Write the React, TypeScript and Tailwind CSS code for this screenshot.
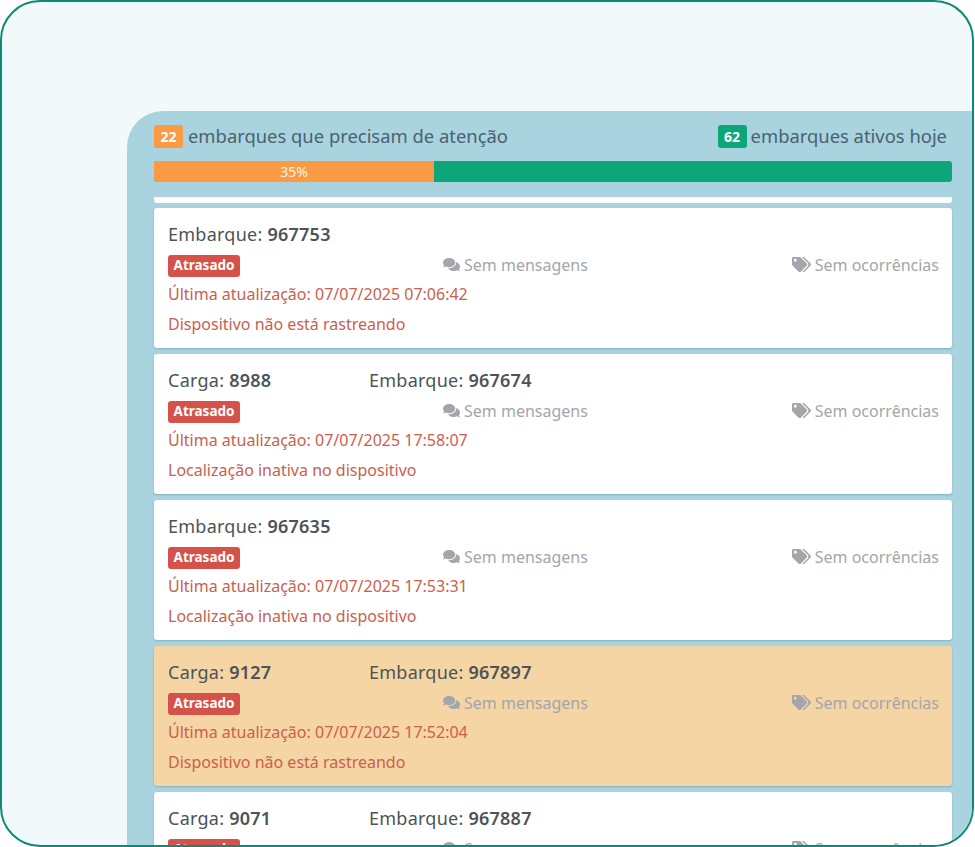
import { FaComments, FaTags } from "react-icons/fa";

type Shipment = {
  carga?: string;
  embarque: string;
  updated: string;
  reason: string;
  highlight?: boolean;
};

const shipments: Shipment[] = [
  { embarque: "967753", updated: "07/07/2025 07:06:42", reason: "Dispositivo não está rastreando" },
  { carga: "8988", embarque: "967674", updated: "07/07/2025 17:58:07", reason: "Localização inativa no dispositivo" },
  { embarque: "967635", updated: "07/07/2025 17:53:31", reason: "Localização inativa no dispositivo" },
  { carga: "9127", embarque: "967897", updated: "07/07/2025 17:52:04", reason: "Dispositivo não está rastreando", highlight: true },
  { carga: "9071", embarque: "967887", updated: "07/07/2025 17:50:12", reason: "Dispositivo não está rastreando" },
];

function ShipmentCard({ s }: { s: Shipment }) {
  return (
    <div
      className={`shrink-0 h-[140px] rounded-[3px] pl-[14px] pr-[13px] pt-[14px] shadow-[0_1px_2px_rgba(60,110,130,0.35)] ${
        s.highlight ? "bg-[#f5d5a3]" : "bg-white"
      }`}
    >
      <div className="flex h-[25px] items-center text-[18px] tracking-[0.25px] text-[#4d5357]">
        {s.carga && (
          <div className="w-[201px]">
            Carga: <b className="font-semibold">{s.carga}</b>
          </div>
        )}
        <div>
          Embarque: <b className="font-semibold">{s.embarque}</b>
        </div>
      </div>
      <div className="mt-[6px] flex h-[23px] items-center text-[16px] text-[#a3a6aa]">
        <div className="w-[275px]">
          <span className="inline-flex h-[22px] w-[72px] items-center justify-center rounded-[3px] bg-[#d4524a] text-[13.5px] font-bold text-white">
            Atrasado
          </span>
        </div>
        <div className="flex items-center gap-[4px]">
          <FaComments className="h-[17px] w-[17px]" />
          Sem mensagens
        </div>
        <div className="ml-auto flex items-center gap-[4px]">
          <FaTags className="h-[19px] w-[19px]" />
          Sem ocorrências
        </div>
      </div>
      <div className="mt-[8px] flex h-[20px] items-center text-[16px] text-[#cc5e4e]">
        Última atualização: {s.updated}
      </div>
      <div className="mt-[10px] flex h-[20px] items-center text-[16px] text-[#cc5e4e]">{s.reason}</div>
    </div>
  );
}

export default function App() {
  return (
    <div className="h-[847px] w-[975px] bg-white font-['Noto_Sans','Open_Sans',sans-serif]">
      <div className="flex h-[847px] w-[974px] flex-col overflow-hidden rounded-[40px] border-2 border-[#0b8a76] bg-[#f2f9fa] pl-[125px] pt-[109px]">
        <div className="flex flex-1 flex-col overflow-hidden rounded-tl-[36px] bg-[#a9d3de] pl-[27px] pr-[20px] pt-[14px]">
          <div className="flex h-[23px] items-center justify-between text-[18.4px] text-[#4a6270]">
            <div className="flex items-center gap-[5px]">
              <span className="flex h-[23px] w-[29px] items-center justify-center rounded-[3px] bg-[#fb9a45] text-[14px] font-bold text-white">
                22
              </span>
              <span className="pb-[2px]">embarques que precisam de atenção</span>
            </div>
            <div className="mr-[5px] flex items-center gap-[4px]">
              <span className="flex h-[23px] w-[29px] items-center justify-center rounded-[3px] bg-[#0da678] text-[14px] font-bold text-white">
                62
              </span>
              <span className="pb-[2px]">embarques ativos hoje</span>
            </div>
          </div>
          <div className="mt-[13px] flex h-[21px] shrink-0 overflow-hidden rounded-[3px] bg-[#0da678] text-[14px] text-[#fff3e3]">
            <div className="flex w-[280px] items-center justify-center bg-[#fb9a45]">35%</div>
          </div>
          <div className="mt-[15px] h-[6px] shrink-0 rounded-b-[3px] bg-white" />
          <div className="mt-[5px] flex flex-col gap-[6px]">
            {shipments.map((s) => (
              <ShipmentCard key={s.embarque} s={s} />
            ))}
          </div>
        </div>
      </div>
    </div>
  );
}
